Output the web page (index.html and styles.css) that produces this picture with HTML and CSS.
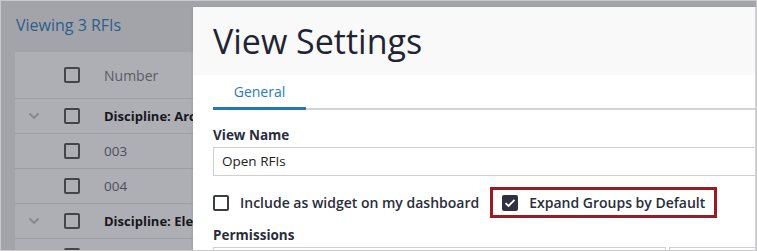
FILE: index.html
```html
<!DOCTYPE html>
<html>
<head>
<meta charset="utf-8">
<link rel="stylesheet" href="styles.css">
</head>
<body>
<div class="frame">
  <div class="page">
    <div class="page-title">Viewing 3 RFIs</div>
    <div class="table">
      <div class="row head">
        <div class="c-toggle"></div>
        <div class="c-check"><span class="box"></span></div>
        <div class="c-text">Number</div>
      </div>
      <div class="row group">
        <div class="c-toggle"><svg width="12" height="8" viewBox="0 0 12 8"><path d="M1.5 1.5 L6 6 L10.5 1.5" fill="none" stroke="#85878f" stroke-width="1.8"/></svg></div>
        <div class="c-check"><span class="box"></span></div>
        <div class="c-text">Discipline: Architectural</div>
      </div>
      <div class="row">
        <div class="c-toggle"></div>
        <div class="c-check"><span class="box"></span></div>
        <div class="c-text num">003</div>
      </div>
      <div class="row">
        <div class="c-toggle"></div>
        <div class="c-check"><span class="box"></span></div>
        <div class="c-text num">004</div>
      </div>
      <div class="row group">
        <div class="c-toggle"><svg width="12" height="8" viewBox="0 0 12 8"><path d="M1.5 1.5 L6 6 L10.5 1.5" fill="none" stroke="#85878f" stroke-width="1.8"/></svg></div>
        <div class="c-check"><span class="box"></span></div>
        <div class="c-text">Discipline: Electrical</div>
      </div>
      <div class="row">
        <div class="c-toggle"></div>
        <div class="c-check"><span class="box"></span></div>
      </div>
    </div>
  </div>

  <div class="modal">
    <div class="modal-head">
      <h1 class="modal-title">View Settings</h1>
    </div>
    <div class="tabs">
      <div class="tab active">General</div>
    </div>
    <div class="modal-body">
      <label class="field-label">View Name</label>
      <div class="input">Open RFIs</div>
      <div class="options">
        <div class="option">
          <span class="cb"></span>
          <span class="opt-label">Include as widget on my dashboard</span>
        </div>
        <div class="option highlighted">
          <span class="cb checked"><svg width="12" height="10" viewBox="0 0 12 10"><path d="M1.5 5.2 L4.5 8 L10.5 1.8" fill="none" stroke="#ffffff" stroke-width="1.8"/></svg></span>
          <span class="opt-label">Expand Groups by Default</span>
        </div>
      </div>
      <label class="field-label perm">Permissions</label>
      <div class="perm-inputs">
        <div class="input short"></div>
        <div class="input short"></div>
      </div>
    </div>
  </div>
</div>
</body>
</html>
```

FILE: styles.css
```css
* { box-sizing: border-box; }
html, body { margin: 0; padding: 0; }
body {
  width: 757px;
  height: 251px;
  overflow: hidden;
  font-family: "Open Sans", "Noto Sans", sans-serif;
  background: #ffffff;
}
.frame {
  position: relative;
  width: 757px;
  height: 251px;
  border: 1px solid #c9c9cd;
  overflow: hidden;
  background: #a3a4aa;
}
.page {
  padding: 0 0 0 14px;
}
.page-title {
  height: 51px;
  padding: 14px 0 0 1px;
  font-size: 16px;
  line-height: 20px;
  color: #2e5e8c;
}
.table {
  background: #aeafb4;
}
.row {
  display: flex;
  align-items: center;
  height: 35px;
  border-top: 1px solid #9d9ea4;
}
.row.head {
  height: 46px;
  border-top: none;
}
.c-toggle {
  width: 35px;
  display: flex;
  justify-content: center;
  align-items: center;
  padding-left: 2px;
}
.c-check {
  width: 54px;
  padding-left: 14px;
  display: flex;
  align-items: center;
}
.box {
  display: block;
  width: 16px;
  height: 16px;
  border: 2px solid #43454d;
  border-radius: 2px;
}
.c-text {
  font-size: 13px;
  white-space: nowrap;
  color: #16171d;
  font-weight: 700;
}
.row.head .c-text {
  color: #5a5c64;
  font-weight: 400;
  font-size: 14px;
}
.c-text.num {
  font-weight: 400;
  font-size: 13.5px;
  color: #4c4e5a;
}

.modal {
  position: absolute;
  left: 192px;
  top: 6px;
  right: 0;
  bottom: 0;
  background: #ffffff;
  border-right: 1px solid #d2d2d6;
  box-shadow: -1px 0 2px rgba(0,0,0,0.08);
}
.modal-head {
  height: 68px;
  background: #f9f9f9;
  padding: 12px 20px 0;
}
.modal-title {
  margin: 0;
  font-size: 34px;
  line-height: 44px;
  font-weight: 400;
  color: #1f2434;
}
.tabs {
  display: flex;
  margin: 0 0 0 20px;
  height: 35px;
  border-bottom: 2px solid #d4d4d8;
}
.tab {
  width: 93px;
  text-align: center;
  font-size: 14px;
  line-height: 20px;
  padding-top: 7px;
  color: #2a7bb8;
  margin-bottom: -2px;
}
.tab.active {
  border-bottom: 3px solid #2479b5;
}
.modal-body {
  padding: 15px 0 0 20px;
}
.field-label {
  display: block;
  font-size: 13.5px;
  line-height: 20px;
  font-weight: 700;
  color: #2a2d3a;
}
.field-label.perm {
  margin-top: 7px;
}
.input {
  margin-top: 2px;
  height: 29px;
  border: 1px solid #d0d0d4;
  border-right: none;
  font-size: 13.5px;
  line-height: 27px;
  padding-left: 8px;
  color: #222222;
}
.options {
  display: flex;
  align-items: center;
  gap: 11px;
  margin-top: 11px;
  height: 31px;
}
.option {
  display: flex;
  align-items: center;
  gap: 11px;
  height: 31px;
}
.option.highlighted {
  border: 3px solid #9b1b23;
  padding: 0 9px 0 9px;
}
.cb {
  display: flex;
  align-items: center;
  justify-content: center;
  width: 16px;
  height: 16px;
  border: 2px solid #3b3d47;
  border-radius: 2px;
}
.cb.checked {
  background: #2f3142;
  border-color: #2f3142;
}
.opt-label {
  font-size: 14px;
  font-weight: 600;
  color: #2a2d3a;
  white-space: nowrap;
}
.perm-inputs {
  display: flex;
  gap: 3px;
}
.input.short {
  width: 453px;
  border-right: 1px solid #d0d0d4;
}
.input.short + .input.short {
  flex: 1;
  border-right: none;
}
```
